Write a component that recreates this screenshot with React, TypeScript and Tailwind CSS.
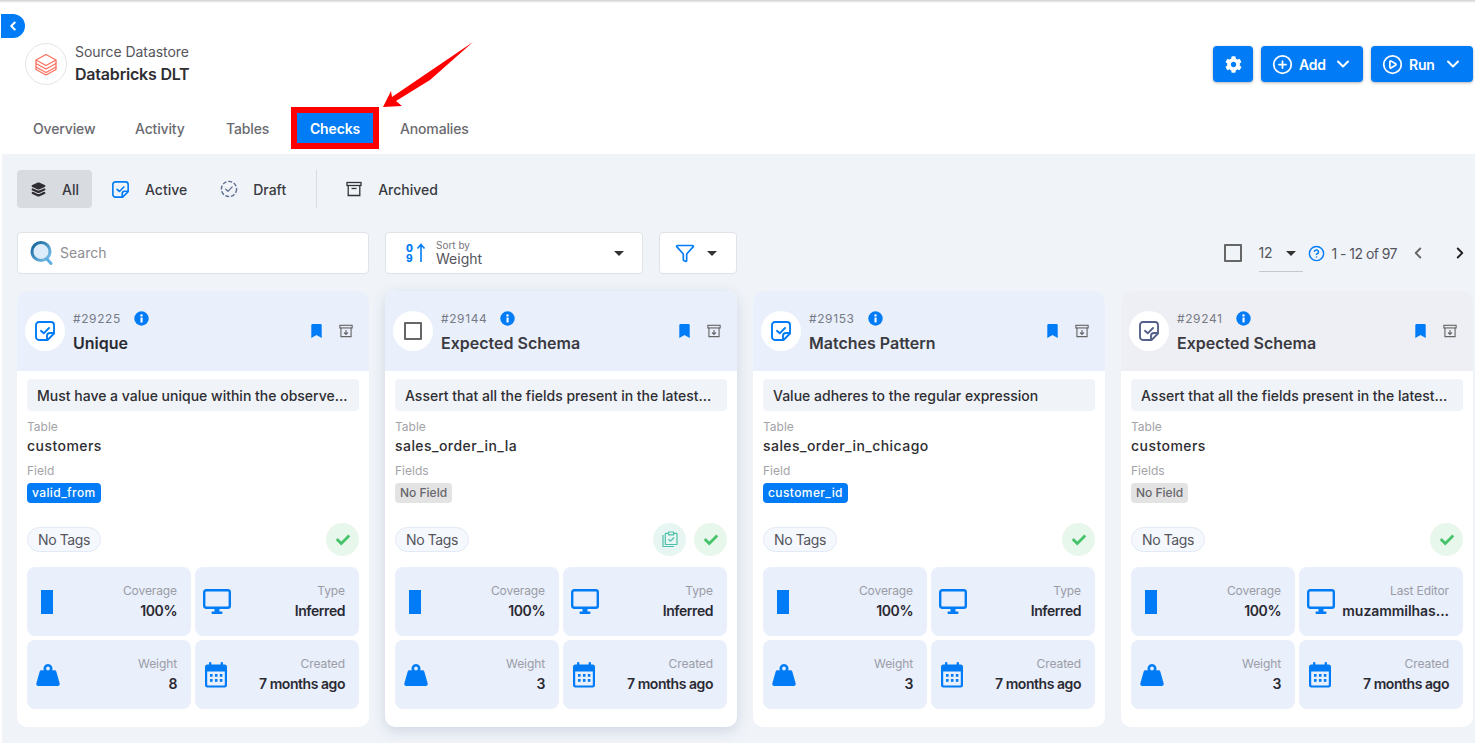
import React from "react";
import { ChevronDown, ChevronLeft, ChevronRight, CirclePlay, CirclePlus, Funnel, CircleHelp } from "lucide-react";
import { FaCheck, FaCog } from "react-icons/fa";
import { IoLayers } from "react-icons/io5";

const CheckNote = ({ color = "#017cf6", size = 20 }: { color?: string; size?: number }) => (
  <svg width={size} height={size} viewBox="0 0 20 20" fill="none">
    <path d="M4 1h12a3 3 0 0 1 3 3v8.5L12.5 19H4a3 3 0 0 1-3-3V4a3 3 0 0 1 3-3Z" stroke={color} strokeWidth="1.9" strokeLinejoin="round" />
    <path d="M12 19v-4a3 3 0 0 1 3-3h4" stroke={color} strokeWidth="1.9" />
    <path d="M6 9.8l2.7 2.5L14 7" stroke={color} strokeWidth="1.9" strokeLinecap="round" strokeLinejoin="round" />
  </svg>
);

const DraftIcon = () => (
  <svg width="18" height="18" viewBox="0 0 18 18" fill="none">
    <circle cx="9" cy="9" r="7.6" stroke="#5f6b8f" strokeWidth="1.4" strokeDasharray="4 1.8" />
    <path d="M5.8 9.2l2.2 2.1 4.2-4.4" stroke="#5f6b8f" strokeWidth="1.2" strokeLinecap="round" strokeLinejoin="round" />
  </svg>
);

const ArchiveBox = ({ size = 16, color = "#333", plus = false }: { size?: number; color?: string; plus?: boolean }) => (
  <svg width={size} height={size} viewBox="0 0 16 16" fill="none">
    <rect x="1" y="1.5" width="14" height="3" stroke={color} strokeWidth="1.3" />
    <path d="M2.2 4.5v10h11.6v-10" stroke={color} strokeWidth="1.3" />
    {plus ? (
      <path d="M8 6.8v5M5.8 9.7L8 11.9l2.2-2.2" stroke={color} strokeWidth="1.3" />
    ) : (
      <path d="M5.5 7.5h5" stroke={color} strokeWidth="1.3" />
    )}
  </svg>
);

const SearchLogo = () => (
  <svg width="24" height="26" viewBox="0 0 24 26" fill="none">
    <defs>
      <linearGradient id="sg" x1="0" y1="0" x2="1" y2="1">
        <stop offset="0" stopColor="#0f5f96" />
        <stop offset="1" stopColor="#7fc4ee" />
      </linearGradient>
    </defs>
    <circle cx="11" cy="11.5" r="8" fill="#dcecfa" />
    <circle cx="11" cy="11.5" r="9" stroke="url(#sg)" strokeWidth="3" />
    <path d="M17 19l4 4.5" stroke="#5aaee2" strokeWidth="3" strokeLinecap="round" />
  </svg>
);

const DatabricksLogo = () => (
  <svg width="24" height="24" viewBox="0 0 24 24" fill="none" stroke="#f9715f" strokeWidth="1.3" strokeLinejoin="round">
    <path d="M12 2.5L22 8l-10 5.5L2 8l10-5.5Z" fill="#fff" />
    <path d="M2 8v3.5L12 17l10-5.5V8" />
    <path d="M2 11.5V15l10 5.5L22 15v-3.5" />
    <path d="M2 15v2.5L12 23l10-5.5V15" />
  </svg>
);

const Bookmark = () => (
  <svg width="11" height="14" viewBox="0 0 11 14">
    <path d="M1.5 0h8A1.2 1.2 0 0 1 10.7 1.2V14L5.5 11 .3 14V1.2A1.2 1.2 0 0 1 1.5 0Z" fill="#017cf6" />
  </svg>
);

const InfoDot = () => (
  <svg width="15" height="15" viewBox="0 0 15 15">
    <circle cx="7.5" cy="7.5" r="7.2" fill="#017cf6" />
    <rect x="6.5" y="6.4" width="2.1" height="5" rx=".4" fill="#fff" />
    <circle cx="7.5" cy="4.4" r="1.2" fill="#fff" />
  </svg>
);

const MonitorIcon = () => (
  <svg width="28" height="26" viewBox="0 0 28 26" fill="none" className="ml-[2px] shrink-0">
    <rect x="1.2" y="1.2" width="25.6" height="17.6" rx="2" stroke="#017cf6" strokeWidth="2.4" />
    <rect x="11.5" y="19" width="5" height="4" fill="#017cf6" />
    <rect x="8.5" y="22.5" width="11" height="2.4" rx="1" fill="#017cf6" />
  </svg>
);

const WeightIcon = () => (
  <svg width="26" height="24" viewBox="0 0 26 24">
    <path d="M13 1a4.5 4.5 0 0 1 4.2 6.2h2.3c.8 0 1.5.5 1.8 1.3l3.4 12c.3 1.2-.6 2.5-1.9 2.5H3.2c-1.3 0-2.2-1.3-1.9-2.5l3.4-12c.3-.8 1-1.3 1.8-1.3h2.3A4.5 4.5 0 0 1 13 1Zm0 2.6a1.9 1.9 0 1 0 0 3.8 1.9 1.9 0 0 0 0-3.8Z" fill="#017cf6" fillRule="evenodd" />
  </svg>
);

const CalendarIcon = () => (
  <svg width="24" height="26" viewBox="0 0 24 26" fill="#017cf6">
    <rect x="5" y="0" width="2.4" height="5" rx="1" />
    <rect x="16.6" y="0" width="2.4" height="5" rx="1" />
    <path fillRule="evenodd" d="M3.5 2.5h17A2.5 2.5 0 0 1 23 5v18a2.5 2.5 0 0 1-2.5 2.5h-17A2.5 2.5 0 0 1 1 23V5a2.5 2.5 0 0 1 2.5-2.5ZM3.2 9.5v13.2c0 .4.3.7.7.7h16.2c.4 0 .7-.3.7-.7V9.5H3.2Z" />
    {[6, 10.9, 15.8].map((x) => (
      <React.Fragment key={x}>
        <rect x={x} y="12" width="2.6" height="2.8" />
        <rect x={x} y="17" width="2.6" height="2.8" />
      </React.Fragment>
    ))}
  </svg>
);

const ClipboardDouble = () => (
  <svg width="16" height="17" viewBox="0 0 16 17" fill="none" stroke="#4dbfa9" strokeWidth="1.2" strokeLinejoin="round">
    <path d="M1 4v11.5h11" />
    <rect x="3.3" y="2.4" width="11.7" height="11.1" rx=".6" />
    <rect x="6.6" y="1" width="5" height="2.8" fill="#e8f6f3" />
    <path d="M6.5 8.3l2 1.9 3.6-3.7" />
  </svg>
);

const Stat = ({ icon, label, value, loose }: { icon: React.ReactNode; label: string; value: string; loose?: boolean }) => (
  <div className="flex h-[69px] items-center justify-between rounded-[8px] bg-[#e9effb] pl-[8px] pr-[14px]">
    <div className="flex w-[26px] shrink-0 justify-center">{icon}</div>
    <div className="min-w-0 text-right">
      <div className="text-[12px] leading-[16px] tracking-[-0.1px] text-[#9a9ca6]">{label}</div>
      <div className={`mt-[2px] whitespace-nowrap text-[14px] font-semibold leading-[20px] text-[#2a2a33] ${loose ? "tracking-[-0.05px]" : "tracking-[-0.45px]"}`}>{value}</div>
    </div>
  </div>
);

type CardData = {
  id: string;
  title: string;
  desc: string;
  table: string;
  fieldLabel: string;
  field: string | null;
  weight: string;
  kind: "active" | "draft" | "muted";
  typeLabel: string;
  typeValue: string;
  lifted?: boolean;
  clip?: boolean;
};

const cards: CardData[] = [
  { id: "#29225", title: "Unique", desc: "Must have a value unique within the observe...", table: "customers", fieldLabel: "Field", field: "valid_from", weight: "8", kind: "active", typeLabel: "Type", typeValue: "Inferred" },
  { id: "#29144", title: "Expected Schema", desc: "Assert that all the fields present in the latest...", table: "sales_order_in_la", fieldLabel: "Fields", field: null, weight: "3", kind: "draft", typeLabel: "Type", typeValue: "Inferred", lifted: true, clip: true },
  { id: "#29153", title: "Matches Pattern", desc: "Value adheres to the regular expression", table: "sales_order_in_chicago", fieldLabel: "Field", field: "customer_id", weight: "3", kind: "active", typeLabel: "Type", typeValue: "Inferred" },
  { id: "#29241", title: "Expected Schema", desc: "Assert that all the fields present in the latest...", table: "customers", fieldLabel: "Fields", field: null, weight: "3", kind: "muted", typeLabel: "Last Editor", typeValue: "muzammilhas..." },
];

const Card = ({ c }: { c: CardData }) => (
  <div className={`overflow-hidden rounded-[10px] bg-white pb-[18px] ${c.lifted ? "shadow-[0_4px_14px_rgba(60,80,120,0.18)]" : ""}`}>
    <div className={`flex h-[80px] items-center pl-[8px] pr-[16px] ${c.kind === "muted" ? "bg-[#eeeff4]" : "bg-[#e9effb]"}`}>
      <div className="flex h-[40px] w-[40px] shrink-0 items-center justify-center rounded-full bg-white">
        {c.kind === "active" && <CheckNote />}
        {c.kind === "muted" && <CheckNote color="#56608a" />}
        {c.kind === "draft" && <span className="h-[18px] w-[18px] rounded-[1px] border-2 border-[#666]" />}
      </div>
      <div className="ml-[8px] min-w-0 flex-1">
        <div className="flex h-[22px] items-center">
          <span className="text-[12px] tracking-[0.6px] text-[#777b85]">{c.id}</span>
          <span className="ml-[13px] flex"><InfoDot /></span>
        </div>
        <div className={`mt-[1px] text-[16px] font-semibold leading-[24px] ${c.title === "Unique" ? "text-[#2a2a33]" : "text-[#3a3a40]"}`}>{c.title}</div>
      </div>
      <div className="flex items-center gap-[17px]">
        <Bookmark />
        <ArchiveBox size={14} color="#666" plus />
      </div>
    </div>
    <div className="px-[10px]">
      <div className="mt-[8px] flex h-[32px] items-center rounded-[4px] bg-[#f0f4f9] pl-[10px] pr-[8px] text-[14px] font-medium text-[#2e2e33]">
        <span className="whitespace-nowrap">{c.desc}</span>
      </div>
      <div className="mt-[8px] text-[12px] leading-[16px] text-[#a3a3a8]">Table</div>
      <div className="mt-[1px] text-[14px] font-medium leading-[20px] tracking-[0.45px] text-[#2e2e33]">{c.table}</div>
      <div className="mt-[7px] text-[12px] leading-[16px] text-[#a3a3a8]">{c.fieldLabel}</div>
      <div className="mt-[4px] flex">
        {c.field ? (
          <span className="flex h-[20px] items-center rounded-[4px] bg-[#017cf6] px-[5px] text-[12px] font-medium tracking-[0.4px] text-white">{c.field}</span>
        ) : (
          <span className="flex h-[20px] items-center rounded-[4px] bg-[#e3e3e3] px-[5px] text-[12px] font-medium text-[#66666c]">No Field</span>
        )}
      </div>
      <div className="mt-[20px] flex h-[33px] items-center justify-between">
        <span className="flex h-[25px] items-center rounded-full border border-[#e3eaf6] bg-[#f5f8fd] px-[10px] text-[14px] tracking-[-0.4px] text-[#55555c]">No Tags</span>
        <div className="flex gap-[8px]">
          {c.clip && (
            <span className="flex h-[33px] w-[33px] items-center justify-center rounded-full bg-[#e8f6f3]"><ClipboardDouble /></span>
          )}
          <span className="flex h-[33px] w-[33px] items-center justify-center rounded-full bg-[#e8f7ec]"><FaCheck size={14} color="#45c46b" /></span>
        </div>
      </div>
      <div className="mt-[11px] grid grid-cols-2 gap-[4px]">
        <Stat icon={<span className="-ml-[2px] block h-[24px] w-[12px] bg-[#017cf6]" />} label="Coverage" value="100%" />
        <Stat icon={<MonitorIcon />} label={c.typeLabel} value={c.typeValue} loose={c.typeLabel === "Last Editor"} />
        <Stat icon={<WeightIcon />} label="Weight" value={c.weight} />
        <Stat icon={<CalendarIcon />} label="Created" value="7 months ago" />
      </div>
    </div>
  </div>
);

const Tab = ({ label, className }: { label: string; className: string }) => (
  <span className={`text-[14px] font-medium tracking-[-0.15px] text-[#6a6a70] ${className}`}>{label}</span>
);

const PrimaryButton = ({ icon, label }: { icon: React.ReactNode; label: string }) => (
  <button className="flex h-[36px] w-[102px] items-center rounded-[4px] bg-[#017cf6] pl-[11px] text-[14px] font-semibold tracking-[-0.2px] text-white shadow-[0_1px_3px_rgba(0,0,0,0.3)]">
    {icon}
    <span className="ml-[6px] w-[26px] text-left">{label}</span>
    <ChevronDown size={20} strokeWidth={2.4} className="ml-[8px]" />
  </button>
);

const Caret = ({ className = "" }: { className?: string }) => (
  <span className={`h-0 w-0 border-x-[5px] border-t-[5px] border-x-transparent border-t-[#333] ${className}`} />
);

export default function App() {
  return (
    <div className="relative h-[743px] w-full overflow-hidden bg-white font-['Inter',sans-serif]">
      <div className="h-[3px] bg-gradient-to-b from-[#cfcfcf] to-white" />
      <header className="relative h-[151px] pl-[3px]">
        <button className="absolute left-[1px] top-[11px] flex h-[24px] w-[24px] items-center justify-center rounded-l-[3px] rounded-r-full bg-[#017cf6] text-white">
          <ChevronLeft size={14} strokeWidth={3.5} />
        </button>
        <div className="flex items-start justify-between pr-[2px] pt-[39px]">
          <div className="ml-[22px] flex items-center">
            <span className="flex h-[42px] w-[42px] items-center justify-center rounded-full border border-[#e4e4e4]"><DatabricksLogo /></span>
            <div className="ml-[8px]">
              <div className="text-[14px] leading-[20px] tracking-[-0.05px] text-[#55555c]">Source Datastore</div>
              <div className="mt-[1px] text-[16px] font-semibold leading-[22px] tracking-[-0.2px] text-[#2e2e33]">Databricks DLT</div>
            </div>
          </div>
          <div className="mt-[4px] flex gap-[8px]">
            <button className="flex h-[36px] w-[40px] items-center justify-center rounded-[4px] bg-[#017cf6] text-white shadow-[0_1px_3px_rgba(0,0,0,0.3)]"><FaCog size={17} /></button>
            <PrimaryButton icon={<CirclePlus size={21} strokeWidth={2} />} label="Add" />
            <PrimaryButton icon={<CirclePlay size={21} strokeWidth={2} />} label="Run" />
          </div>
        </div>
        <nav className="mt-[22px] flex h-[42px] items-center pl-[30px]">
          <Tab label="Overview" className="w-[102px]" />
          <Tab label="Activity" className="w-[91px]" />
          <Tab label="Tables" className="w-[65px]" />
          <span className="flex h-[42px] w-[88px] items-center justify-center border-[6px] border-[#ff0000] bg-[#017cf6] text-[14px] font-semibold tracking-[-0.15px] text-white">Checks</span>
          <Tab label="Anomalies" className="ml-[21px]" />
        </nav>
        <svg className="absolute left-[380px] top-[33px]" width="95" height="72" viewBox="0 0 95 72">
          <path d="M93 6L12 61 11 55 3 71 22 70 16 65 50 44Z" fill="#ff0000" />
        </svg>
      </header>

      <main className="ml-[2px] h-[589px] bg-[#f0f4f9] pl-[17px] pr-[2px] pt-[16px]">
        <div className="-ml-[2px] flex h-[38px] items-center text-[14px] font-medium text-[#3a3a40]">
          <span className="flex h-[38px] w-[75px] items-center rounded-[4px] bg-[#d8dce1] pl-[13px]">
            <IoLayers size={17} color="#2e2e33" />
            <span className="ml-[15px]">All</span>
          </span>
          <span className="ml-[20px] flex items-center"><CheckNote size={17} /><span className="ml-[16px]">Active</span></span>
          <span className="ml-[33px] flex items-center"><DraftIcon /><span className="ml-[15px]">Draft</span></span>
          <span className="ml-[30px] h-[38px] w-px bg-[#d8dce1]" />
          <span className="ml-[29px] flex items-center"><ArchiveBox size={16} /><span className="ml-[16px]">Archived</span></span>
        </div>

        <div className="-ml-[2px] mt-[24px] flex h-[42px] items-stretch">
          <div className="flex w-[352px] items-center rounded-[4px] border border-[#dfe3e8] bg-white pb-[1px] pl-[12px] text-[14px] text-[#8d8d92]">
            <SearchLogo />
            <span className="ml-[6px]">Search</span>
          </div>
          <div className="ml-[16px] flex w-[258px] items-center rounded-[4px] border border-[#dfe3e8] bg-white pl-[20px] pr-[18px]">
            <span className="flex w-[30px] items-center">
              <span className="flex flex-col text-[10px] font-extrabold leading-[10px] text-[#017cf6]"><span>0</span><span>9</span></span>
              <svg className="ml-[3px]" width="10" height="20" viewBox="0 0 10 20"><path d="M5 19V2M1.5 5.5L5 1.5l3.5 4" stroke="#017cf6" strokeWidth="1.6" fill="none" /></svg>
            </span>
            <span className="flex-1">
              <span className="block text-[10px] leading-[12px] text-[#77777c]">Sort by</span>
              <span className="block text-[14px] leading-[16px] text-[#55555c]">Weight</span>
            </span>
            <Caret />
          </div>
          <div className="ml-[16px] flex w-[78px] items-center rounded-[4px] border border-[#dfe3e8] bg-white pl-[15px]">
            <Funnel size={20} color="#017cf6" strokeWidth={2} />
            <Caret className="ml-[12px]" />
          </div>
          <div className="ml-auto flex items-center pr-[4px]">
            <span className="h-[18px] w-[18px] rounded-[1px] border-2 border-[#666]" />
            <span className="relative ml-[17px] flex h-[38px] w-[44px] items-center border-b border-[#c8c8c8] text-[14px] tracking-[-0.3px] text-[#55555c]">
              12
              <Caret className="absolute right-[7px] top-[17px]" />
            </span>
            <CircleHelp size={17} color="#017cf6" className="ml-[5px]" />
            <span className="ml-[7px] whitespace-nowrap text-[14px] tracking-[-0.55px] text-[#55555c]">1 - 12 of 97</span>
            <ChevronLeft size={18} color="#666" strokeWidth={2.5} className="ml-[12px]" />
            <ChevronRight size={18} color="#222" strokeWidth={2.5} className="ml-[24px]" />
          </div>
        </div>

        <div className="-ml-[2px] mt-[17px] grid grid-cols-[repeat(4,352px)] gap-x-[16px]">
          {cards.map((c) => <Card key={c.id} c={c} />)}
        </div>
      </main>
    </div>
  );
}
